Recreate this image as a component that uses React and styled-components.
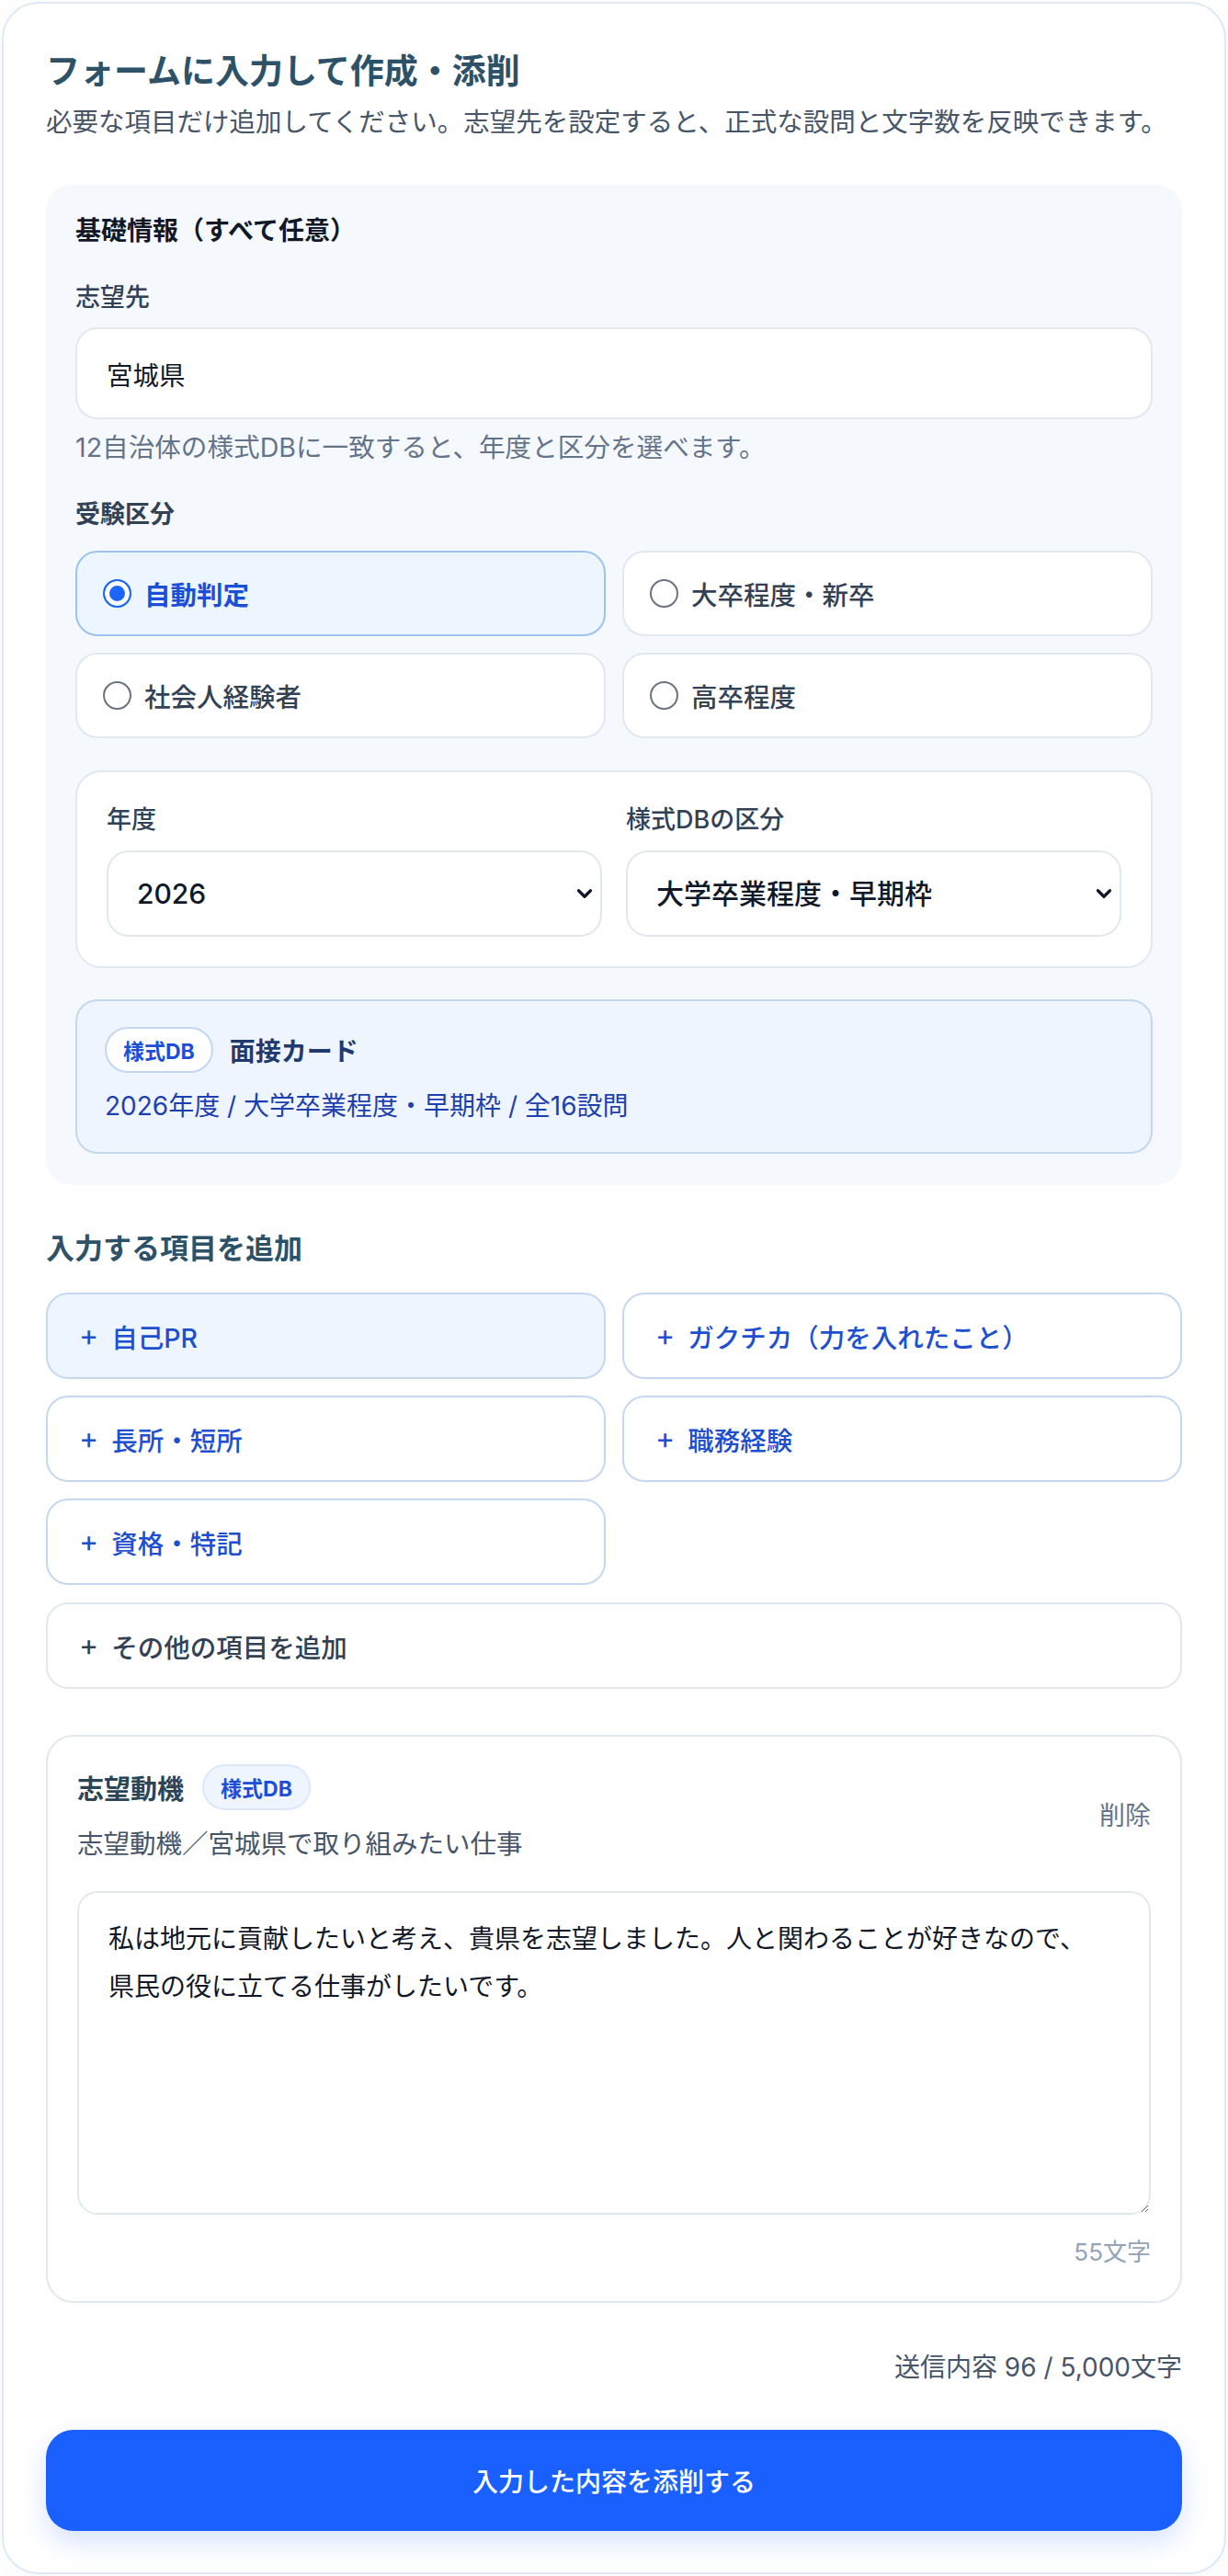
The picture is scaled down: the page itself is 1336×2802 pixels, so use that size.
import React, { useState } from 'react';
import styled, { createGlobalStyle } from 'styled-components';
import { ChevronDown } from 'lucide-react';

const GlobalStyle = createGlobalStyle`
  * { box-sizing: border-box; }
  body {
    margin: 0;
    background: #ffffff;
    font-family: Inter, "Noto Sans CJK JP", "Noto Sans", sans-serif;
    color: #111827;
  }
`;

const Page = styled.div`
  padding: 2px;
`;

const Card = styled.div`
  border: 2px solid #dfe9f4;
  border-radius: 40px;
  background: #fff;
  padding: 48px 46px 45px;
  display: flex;
  flex-direction: column;
  box-shadow: 0 8px 30px rgba(30, 64, 120, 0.04);
`;

const Title = styled.h1`
  margin: 0;
  font-size: 37px;
  line-height: 52px;
  font-weight: 600;
  color: #2d5268;
`;

const Lead = styled.p`
  margin: 7px 0 0;
  font-size: 28.5px;
  line-height: 44px;
  color: #475569;
`;

const Panel = styled.section`
  margin-top: 46px;
  background: #f5f8fc;
  border-radius: 28px;
  padding: 30px 32px 34px;
  display: flex;
  flex-direction: column;
`;

const PanelHeading = styled.h2`
  margin: 0;
  font-size: 28px;
  line-height: 40px;
  font-weight: 700;
  color: #111827;
`;

const Label = styled.div`
  margin-top: ${(p) => p.$mt || 0}px;
  font-size: 27px;
  line-height: 40px;
  font-weight: ${(p) => (p.$strong ? 600 : 500)};
  color: #334155;
`;

const TextInput = styled.input`
  margin-top: 12px;
  height: 100px;
  width: 100%;
  border: 2px solid #e2e8f0;
  border-radius: 24px;
  background: #fff;
  padding: 0 32px;
  font: inherit;
  font-size: 28.5px;
  color: #111827;
  outline: none;
`;

const Hint = styled.div`
  margin-top: 11px;
  font-size: 28.6px;
  line-height: 40px;
  color: #64748b;
`;

const Grid2 = styled.div`
  margin-top: ${(p) => p.$mt || 0}px;
  display: grid;
  grid-template-columns: 1fr 1fr;
  gap: 18px;
`;

const RadioCard = styled.label`
  height: 93px;
  display: flex;
  align-items: center;
  gap: 14px;
  padding: 0 28px;
  border: 2px solid ${(p) => (p.$on ? '#9cc3ee' : '#e2e8f0')};
  background: ${(p) => (p.$on ? '#edf5ff' : '#fff')};
  border-radius: 24px;
  font-size: 28.5px;
  font-weight: ${(p) => (p.$on ? 600 : 500)};
  color: ${(p) => (p.$on ? '#1d4ed8' : '#334155')};
  cursor: pointer;
`;

const Radio = styled.input`
  appearance: none;
  margin: 0;
  width: 31px;
  height: 31px;
  border-radius: 50%;
  border: 2px solid #6b7280;
  background: #fff;
  flex-shrink: 0;
  &:checked {
    border: 2px solid #1a66ff;
    background: #1a66ff;
    box-shadow: inset 0 0 0 5px #fff;
  }
`;

const YearBox = styled.div`
  margin-top: 35px;
  background: #fff;
  border: 2px solid #e2e8f0;
  border-radius: 28px;
  padding: 32px;
  display: grid;
  grid-template-columns: 1fr 1fr;
  column-gap: 26px;
`;

const Field = styled.div`
  display: flex;
  flex-direction: column;
`;

const SelectWrap = styled.div`
  position: relative;
  margin-top: 13px;
  svg {
    position: absolute;
    right: 6px;
    top: 50%;
    transform: translateY(-50%);
    color: #111827;
    pointer-events: none;
  }
`;

const Select = styled.select`
  appearance: none;
  width: 100%;
  height: 94px;
  border: 2px solid #e2e8f0;
  border-radius: 24px;
  background: #fff;
  padding: 0 48px 0 31px;
  font: inherit;
  font-size: 30px;
  font-weight: 500;
  color: #111827;
  outline: none;
`;

const DbCard = styled.div`
  margin-top: 34px;
  background: #eef5fe;
  border: 2px solid #c3d7ee;
  border-radius: 24px;
  padding: 28px 30px 30px;
`;

const DbHead = styled.div`
  display: flex;
  align-items: center;
  gap: 18px;
`;

const Badge = styled.span`
  display: inline-flex;
  align-items: center;
  height: 50px;
  padding: 0 18px;
  border-radius: 999px;
  border: 2px solid ${(p) => (p.$tint ? '#dce8fa' : '#c3d7ee')};
  background: ${(p) => (p.$tint ? '#eef5fe' : '#fff')};
  color: #1d4ed8;
  font-size: 23px;
  font-weight: 700;
`;

const DbTitle = styled.span`
  font-size: 28px;
  font-weight: 700;
  color: #1e3a6e;
`;

const DbMeta = styled.div`
  margin-top: 16px;
  font-size: 28px;
  line-height: 40px;
  color: #1e40af;
`;

const SectionTitle = styled.h2`
  margin: 47px 0 0;
  font-size: 31px;
  line-height: 44px;
  font-weight: 600;
  color: #2d5268;
`;

const AddButton = styled.button`
  height: 94px;
  display: flex;
  align-items: center;
  gap: 14px;
  padding: 0 34px;
  border: 2px solid ${(p) => (p.$muted ? '#e2e8f0' : '#c6d8ef')};
  background: ${(p) => (p.$active ? '#edf5ff' : '#fff')};
  border-radius: 24px;
  font: inherit;
  font-size: 28.5px;
  font-weight: 500;
  color: ${(p) => (p.$muted ? '#334155' : '#1d4fd0')};
  text-align: left;
  cursor: pointer;
  margin-top: ${(p) => p.$mt || 0}px;
`;

const Plus = styled.span`
  font-size: 32px;
  font-weight: 400;
  line-height: 1;
`;

const ItemCard = styled.div`
  margin-top: 50px;
  border: 2px solid #e2e8f0;
  border-radius: 30px;
  background: #fff;
  padding: 30px 32px 35px;
  display: flex;
  flex-direction: column;
`;

const ItemHead = styled.div`
  display: flex;
  align-items: center;
  justify-content: space-between;
`;

const ItemTitleRow = styled.div`
  display: flex;
  align-items: center;
  gap: 20px;
`;

const ItemTitle = styled.span`
  font-size: 29px;
  font-weight: 600;
  color: #2b4456;
`;

const ItemSub = styled.div`
  margin-top: 16px;
  font-size: 28.5px;
  line-height: 42px;
  color: #475569;
`;

const Remove = styled.button`
  border: 0;
  background: none;
  padding: 0;
  font: inherit;
  font-size: 28px;
  color: #64748b;
  cursor: pointer;
`;

const TextArea = styled.textarea`
  margin-top: 30px;
  width: 100%;
  height: 352px;
  border: 2px solid #e2e8f0;
  border-radius: 22px;
  padding: 24px 50px 24px 32px;
  font: inherit;
  font-size: 28px;
  line-height: 52px;
  color: #111827;
  resize: vertical;
  outline: none;
`;

const Count = styled.div`
  margin-top: 23px;
  text-align: right;
  font-size: 26px;
  line-height: 36px;
  color: #94a3b8;
`;

const Total = styled.div`
  margin-top: 50px;
  text-align: right;
  font-size: 28px;
  line-height: 40px;
  color: #475569;
`;

const Submit = styled.button`
  margin-top: 48px;
  height: 110px;
  width: 100%;
  border: 0;
  border-radius: 30px;
  background: #1a5fff;
  color: #fff;
  font: inherit;
  font-size: 28px;
  font-weight: 500;
  box-shadow: 0 12px 30px rgba(26, 95, 255, 0.18);
  cursor: pointer;
`;

const kinds = ['自動判定', '大卒程度・新卒', '社会人経験者', '高卒程度'];
const items = ['自己PR', 'ガクチカ（力を入れたこと）', '長所・短所', '職務経験', '資格・特記'];

const motive =
  '私は地元に貢献したいと考え、貴県を志望しました。人と関わることが好きなので、県民の役に立てる仕事がしたいです。';

export default function App() {
  const [kind, setKind] = useState(kinds[0]);
  const [text, setText] = useState(motive);

  return (
    <Page>
      <GlobalStyle />
      <Card>
        <Title>フォームに入力して作成・添削</Title>
        <Lead>必要な項目だけ追加してください。志望先を設定すると、正式な設問と文字数を反映できます。</Lead>

        <Panel>
          <PanelHeading>基礎情報（すべて任意）</PanelHeading>
          <Label $mt={33}>志望先</Label>
          <TextInput defaultValue='宮城県' />
          <Hint>12自治体の様式DBに一致すると、年度と区分を選べます。</Hint>

          <Label $mt={33} $strong>受験区分</Label>
          <Grid2 $mt={19}>
            {kinds.map((k) => (
              <RadioCard key={k} $on={kind === k}>
                <Radio
                  type='radio'
                  name='kind'
                  checked={kind === k}
                  onChange={() => setKind(k)}
                />
                {k}
              </RadioCard>
            ))}
          </Grid2>

          <YearBox>
            <Field>
              <Label>年度</Label>
              <SelectWrap>
                <Select defaultValue='2026'>
                  <option>2026</option>
                  <option>2025</option>
                </Select>
                <ChevronDown size={26} strokeWidth={3} />
              </SelectWrap>
            </Field>
            <Field>
              <Label>様式DBの区分</Label>
              <SelectWrap>
                <Select defaultValue='大学卒業程度・早期枠'>
                  <option>大学卒業程度・早期枠</option>
                  <option>大学卒業程度</option>
                </Select>
                <ChevronDown size={26} strokeWidth={3} />
              </SelectWrap>
            </Field>
          </YearBox>

          <DbCard>
            <DbHead>
              <Badge>様式DB</Badge>
              <DbTitle>面接カード</DbTitle>
            </DbHead>
            <DbMeta>2026年度 / 大学卒業程度・早期枠 / 全16設問</DbMeta>
          </DbCard>
        </Panel>

        <SectionTitle>入力する項目を追加</SectionTitle>
        <Grid2 $mt={26}>
          {items.map((it, i) => (
            <AddButton key={it} $active={i === 0}>
              <Plus>+</Plus>
              {it}
            </AddButton>
          ))}
        </Grid2>
        <AddButton $muted $mt={19}>
          <Plus>+</Plus>
          その他の項目を追加
        </AddButton>

        <ItemCard>
          <ItemHead>
            <div>
              <ItemTitleRow>
                <ItemTitle>志望動機</ItemTitle>
                <Badge $tint>様式DB</Badge>
              </ItemTitleRow>
              <ItemSub>志望動機／宮城県で取り組みたい仕事</ItemSub>
            </div>
            <Remove>削除</Remove>
          </ItemHead>
          <TextArea value={text} onChange={(e) => setText(e.target.value)} />
          <Count>{text.length}文字</Count>
        </ItemCard>

        <Total>送信内容 96 / 5,000文字</Total>
        <Submit>入力した内容を添削する</Submit>
      </Card>
    </Page>
  );
}
